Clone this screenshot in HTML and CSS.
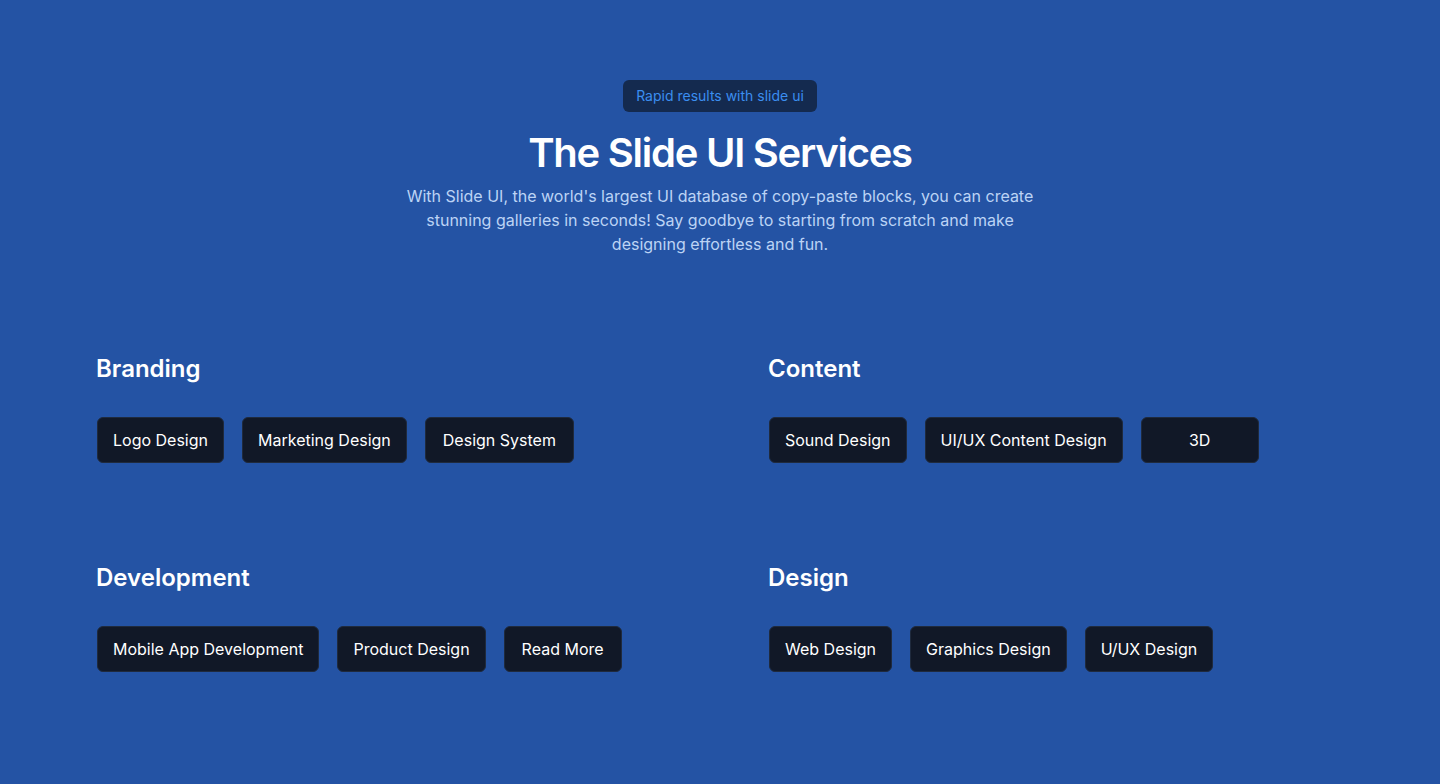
FILE: index.html
```html
<!DOCTYPE html>
<html lang="en">
<head>
<meta charset="utf-8">
<title>The Slide UI Services</title>
<link rel="stylesheet" href="styles.css">
</head>
<body>
<main class="page">
  <header class="hero">
    <span class="badge">Rapid results with slide ui</span>
    <h1 class="title">The Slide UI Services</h1>
    <p class="lead">With Slide UI, the world's largest UI database of copy-paste blocks, you can create stunning galleries in seconds! Say goodbye to starting from scratch and make designing effortless and fun.</p>
  </header>
  <section class="grid">
    <div class="group">
      <h2 class="group-title">Branding</h2>
      <div class="tags">
        <button class="tag">Logo Design</button>
        <button class="tag">Marketing Design</button>
        <button class="tag tag-roomy">Design System</button>
      </div>
    </div>
    <div class="group">
      <h2 class="group-title">Content</h2>
      <div class="tags">
        <button class="tag">Sound Design</button>
        <button class="tag">UI/UX Content Design</button>
        <button class="tag tag-wide">3D</button>
      </div>
    </div>
    <div class="group">
      <h2 class="group-title">Development</h2>
      <div class="tags">
        <button class="tag">Mobile App Development</button>
        <button class="tag">Product Design</button>
        <button class="tag tag-roomy">Read More</button>
      </div>
    </div>
    <div class="group">
      <h2 class="group-title">Design</h2>
      <div class="tags">
        <button class="tag">Web Design</button>
        <button class="tag">Graphics Design</button>
        <button class="tag">U/UX Design</button>
      </div>
    </div>
  </section>
</main>
</body>
</html>
```

FILE: styles.css
```css
* { box-sizing: border-box; }
html, body {
  margin: 0;
  padding: 0;
  background: #2453a4;
  font-family: Inter, "Noto Sans", sans-serif;
  color: #ffffff;
}
.page {
  max-width: 1280px;
  margin: 0 auto;
  padding: 80px 16px 0;
  min-height: 784px;
}
.hero {
  display: flex;
  flex-direction: column;
  align-items: center;
  text-align: center;
}
.badge {
  display: inline-block;
  height: 32px;
  line-height: 32px;
  padding: 0 13px;
  border-radius: 6px;
  background: #142a4f;
  color: #3b8ef0;
  font-size: 14px;
}
.title {
  margin: 17px 0 7px;
  font-size: 40px;
  line-height: 48px;
  font-weight: 600;
  letter-spacing: -1.25px;
}
.lead {
  margin: 0;
  max-width: 640px;
  font-size: 16px;
  line-height: 24px;
  color: #bcd3f5;
}
.grid {
  display: grid;
  grid-template-columns: 1fr 1fr;
  column-gap: 96px;
  row-gap: 99px;
  margin-top: 97px;
}
.group-title {
  margin: 0;
  font-size: 24px;
  line-height: 32px;
  font-weight: 600;
}
.tags {
  display: flex;
  gap: 18px;
  margin-top: 32px;
  padding-left: 1px;
}
.tag {
  height: 46px;
  padding: 0 15px;
  border: 1px solid #1f2a3d;
  border-radius: 6px;
  background: #111827;
  color: #ffffff;
  font-family: Inter, "Noto Sans", sans-serif;
  font-size: 16px;
  font-weight: 400;
}
.tag-roomy { padding: 0 17px; }
.tag-wide { min-width: 118px; }
```
